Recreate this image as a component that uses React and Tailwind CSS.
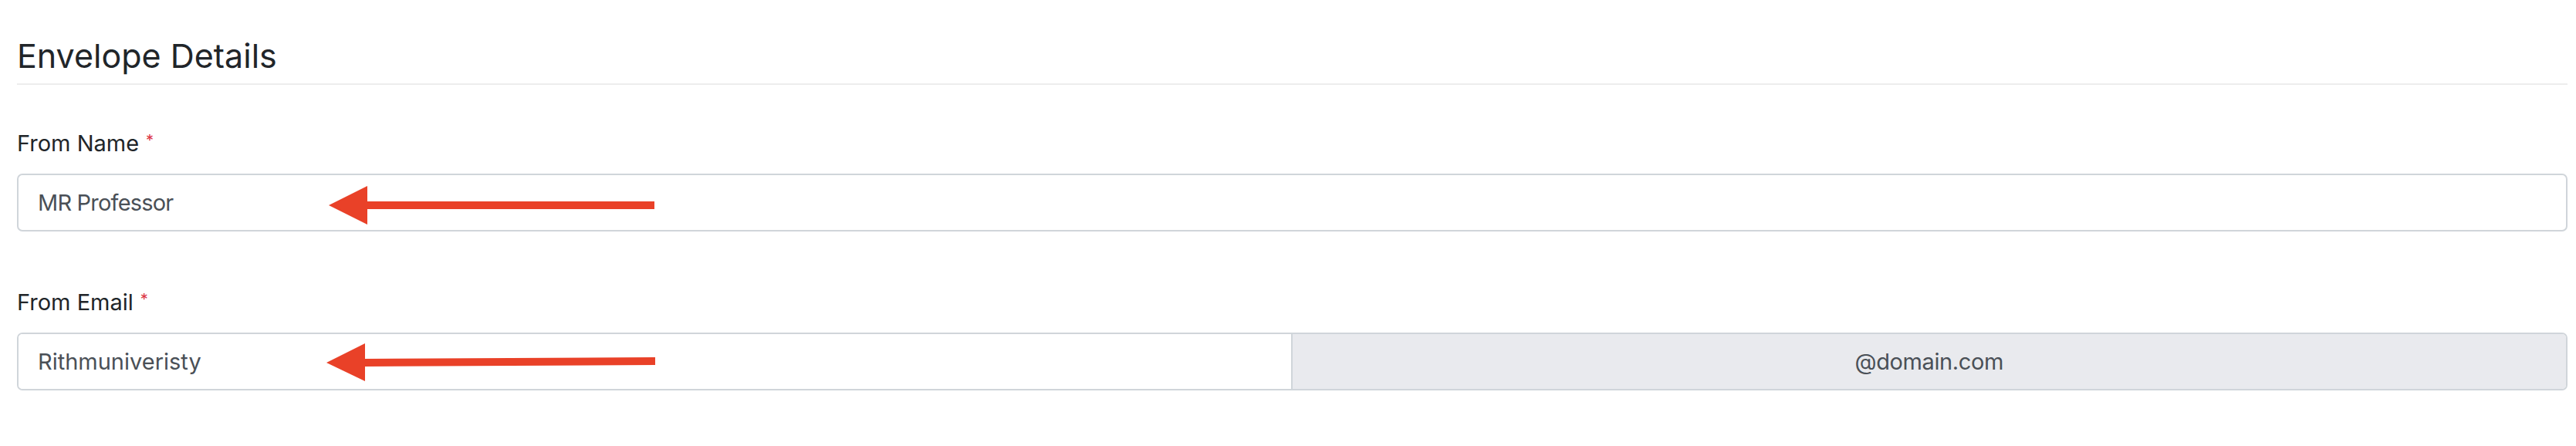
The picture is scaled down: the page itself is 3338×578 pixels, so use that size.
export default function App() {
  return (
    <div className="w-full h-[578px] bg-white pl-[22px] pr-[11px] font-['Inter','Liberation_Sans',sans-serif]">
      <div className="pt-[48px]">
        <h2 className="text-[43px] leading-[48px] text-[#212529] font-normal pb-[12px] border-b-2 border-[#ededed]">
          Envelope Details
        </h2>
      </div>

      <div className="mt-[58px]">
        <label className="flex items-start text-[29px] leading-[36px] text-[#212529]">
          From Name
          <span className="ml-[9px] text-[20px] leading-[28px] text-[#dc3545]">*</span>
        </label>
        <div className="relative mt-[21px]">
          <div className="h-[75px] border-2 border-[#d0d5da] rounded-[7px] flex items-center pl-[25px] text-[29px] tracking-[-0.8px] text-[#4a5057]">
            MR Professor
          </div>
          <svg className="absolute left-0 top-0 overflow-visible" width="900" height="75" viewBox="0 0 900 75">
            <polygon points="404,41 454,16 454,66" fill="#e94128" />
            <rect x="452" y="36" width="374" height="10" fill="#e94128" />
          </svg>
        </div>
      </div>

      <div className="mt-[74px]">
        <label className="flex items-start text-[29px] leading-[36px] text-[#212529]">
          From Email
          <span className="ml-[9px] text-[20px] leading-[28px] text-[#dc3545]">*</span>
        </label>
        <div className="relative mt-[21px]">
          <div className="h-[75px] border-2 border-[#d0d5da] rounded-[7px] grid grid-cols-2 overflow-hidden">
            <div className="flex items-center pl-[25px] text-[29px] text-[#4a5057] bg-white border-r-2 border-[#d0d5da]">
              Rithmuniveristy
            </div>
            <div className="flex items-center justify-center bg-[#e9eaee] text-[29px] tracking-[-0.4px] text-[#4a5057]">
              @domain.com
            </div>
          </div>
          <svg className="absolute left-0 top-0 overflow-visible" width="900" height="75" viewBox="0 0 900 75">
            <polygon points="401,39 451,14 451,63" fill="#e94128" />
            <polygon points="449,34 827,32 827,42 449,44" fill="#e94128" />
          </svg>
        </div>
      </div>
    </div>
  );
}
